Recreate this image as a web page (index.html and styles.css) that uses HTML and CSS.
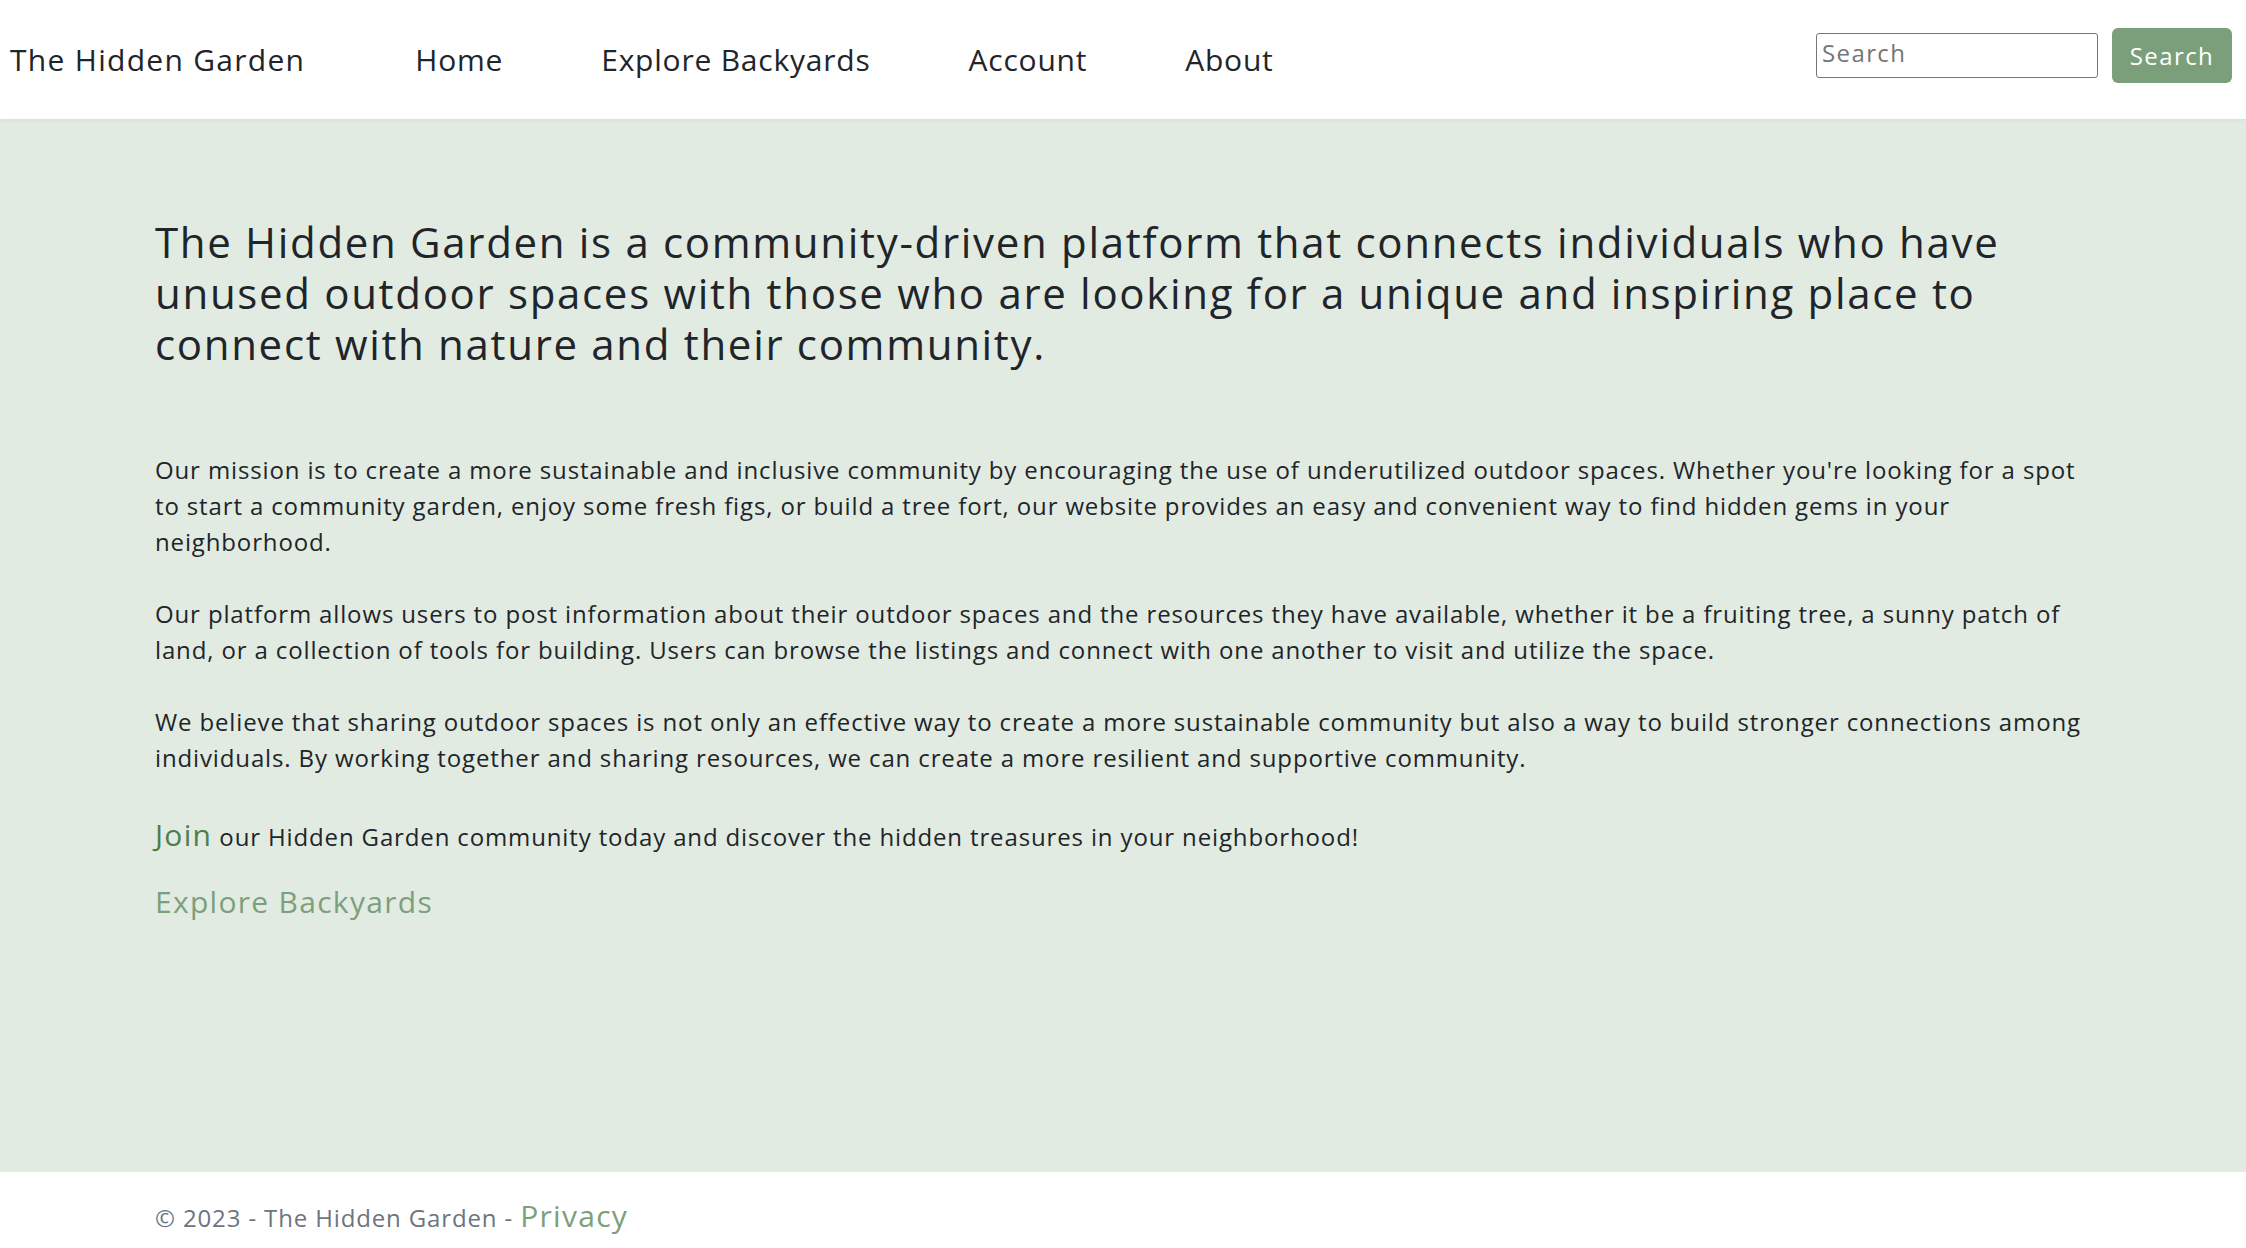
FILE: index.html
```html
<!DOCTYPE html>
<html lang="en">
<head>
<meta charset="utf-8">
<title>The Hidden Garden</title>
<link rel="stylesheet" href="styles.css">
</head>
<body>
<header class="navbar">
  <a class="brand" href="#">The Hidden Garden</a>
  <nav class="nav">
    <a class="nav-link" href="#">Home</a>
    <a class="nav-link" href="#">Explore Backyards</a>
    <a class="nav-link" href="#">Account</a>
    <a class="nav-link" href="#">About</a>
  </nav>
  <form class="search">
    <input class="search-input" type="text" placeholder="Search">
    <button class="search-btn" type="button">Search</button>
  </form>
</header>
<main class="main">
  <div class="container">
    <h3 class="lead-title">The Hidden Garden is a community-driven platform that connects individuals who have unused outdoor spaces with those who are looking for a unique and inspiring place to connect with nature and their community.</h3>
    <p class="para">Our mission is to create a more sustainable and inclusive community by encouraging the use of underutilized outdoor spaces. Whether you're looking for a spot to start a community garden, enjoy some fresh figs, or build a tree fort, our website provides an easy and convenient way to find hidden gems in your neighborhood.</p>
    <p class="para">Our platform allows users to post information about their outdoor spaces and the resources they have available, whether it be a fruiting tree, a sunny patch of land, or a collection of tools for building. Users can browse the listings and connect with one another to visit and utilize the space.</p>
    <p class="para">We believe that sharing outdoor spaces is not only an effective way to create a more sustainable community but also a way to build stronger connections among individuals. By working together and sharing resources, we can create a more resilient and supportive community.</p>
    <p class="join"><a class="join-link" href="#">Join</a> our Hidden Garden community today and discover the hidden treasures in your neighborhood!</p>
    <p class="explore"><a class="explore-link" href="#">Explore Backyards</a></p>
  </div>
</main>
<footer class="footer">
  <div class="container">
    <span class="copy">© 2023 - The Hidden Garden - </span><a class="privacy" href="#">Privacy</a>
  </div>
</footer>
</body>
</html>
```
FILE: styles.css
```css
* { box-sizing: border-box; }
html, body { margin: 0; padding: 0; }
body {
  font-family: "Open Sans", "Noto Sans", sans-serif;
  color: #212529;
  background: #ffffff;
  font-size: 24px;
  line-height: 36px;
  letter-spacing: 0.036em;
}
a { text-decoration: none; }

.navbar {
  height: 119px;
  display: flex;
  align-items: center;
  padding: 0 14px 0 10px;
  background: #ffffff;
  position: relative;
  z-index: 1;
  box-shadow: 0 2px 4px rgba(0,0,0,0.04);
}
.brand {
  font-size: 30px;
  color: #212529;
  margin-right: 61px;
  letter-spacing: 0.043em;
}
.nav { display: flex; }
.nav-link {
  font-size: 30px;
  color: #212529;
  padding: 0 49px;
  letter-spacing: 0.026em;
}
.search {
  margin-left: auto;
  display: flex;
  align-items: center;
  gap: 14px;
  margin-bottom: 9px;
}
.search-input {
  width: 282px;
  height: 45px;
  border: 1px solid #767676;
  border-radius: 3px;
  font-family: inherit;
  font-size: 24px;
  letter-spacing: 0.058em;
  padding: 0 5px 6px;
  color: #212529;
}
.search-input::placeholder { color: #757575; }
.search-btn {
  width: 120px;
  height: 55px;
  background: #7b9f7b;
  color: #ffffff;
  border: none;
  border-radius: 6px;
  font-family: inherit;
  font-size: 24px;
  letter-spacing: 0.058em;
  padding: 0;
}

.main {
  background: #e2ebe2;
  height: 1053px;
  padding-top: 97px;
}
.container {
  padding: 0 155px;
}
.lead-title {
  margin: 0 0 83px;
  font-size: 42px;
  line-height: 51px;
  font-weight: 400;
  color: #212529;
  letter-spacing: 0.04em;
}
.para {
  margin: 0 0 36px;
}
.join {
  margin: 0;
  line-height: 45px;
}
.join-link {
  font-size: 30px;
  color: #4e7d4e;
  letter-spacing: 0.043em;
}
.explore {
  margin: 20px 0 0;
  line-height: 45px;
}
.explore-link {
  font-size: 30px;
  color: #7ba07b;
  letter-spacing: 0.043em;
}

.footer {
  height: 76px;
  background: #ffffff;
  padding-top: 26px;
}
.copy {
  color: #6c757d;
  font-size: 24px;
}
.privacy {
  font-size: 30px;
  color: #7ba07b;
  letter-spacing: 0.043em;
}
```
